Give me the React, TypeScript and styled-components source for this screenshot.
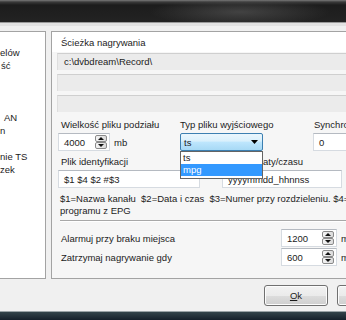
import React from "react";
import styled, { createGlobalStyle } from "styled-components";

const GlobalStyle = createGlobalStyle`
	html, body {
		margin: 0;
		padding: 0;
		background: #f0f0f0;
	}
	body {
		font-family: "Liberation Sans", Arial, sans-serif;
		font-size: 9.5px;
		color: #1c1c1c;
	}
`;

const Window = styled.div`
	width: 346px;
	height: 320px;
	overflow: hidden;
	display: flex;
	flex-direction: column;
	background: #f0f0f0;
`;

const TopFrame = styled.div`
	flex: none;
	height: 22px;
	background: radial-gradient(ellipse 90px 14px at 240px 12px, rgba(90, 90, 90, 0.6), transparent),
		linear-gradient(to bottom, #7a7a7a 0, #3a3a3a 2px, #1c1c1c 5px, #232323 100%);
	border-bottom: 1px solid #9a9a9a;
`;

const FrameEdge = styled.div`
	flex: none;
	height: 3px;
	background: #e2e2e2;
`;

const Body = styled.div`
	flex: none;
	display: flex;
	gap: 5px;
	padding-top: 5px;
	height: 248px;
`;

const TreeList = styled.div`
	flex: none;
	box-sizing: border-box;
	width: 46px;
	height: 248px;
	background: #fff;
	border: 1px solid #a3a3a3;
	border-left: none;
	padding-top: 14px;
	overflow: hidden;
`;

const TreeItem = styled.div<{ $indent: number }>`
	height: 13px;
	line-height: 13px;
	padding-left: ${(p) => p.$indent}px;
	white-space: nowrap;
`;

const Panel = styled.div`
	flex: none;
	box-sizing: border-box;
	width: 320px;
	height: 248px;
	background: #f6f6f6;
	border: 1px solid #a3a3a3;
	border-right: none;
`;

const PanelHeader = styled.div`
	height: 20px;
	line-height: 22px;
	padding-left: 9px;
	background: #fff;
`;

const Content = styled.div`
	padding-left: 6px;
	display: flex;
	flex-direction: column;
`;

const GreyField = styled.div<{ $top: number }>`
	box-sizing: border-box;
	height: 17px;
	margin-top: ${(p) => p.$top}px;
	margin-left: -1px;
	padding-left: 6px;
	line-height: 16px;
	background: #ebebeb;
	border-top: 1px solid #cfcfcf;
	border-left: 1px solid #dedede;
`;

const FieldRow = styled.div<{ $top: number }>`
	display: flex;
	margin-top: ${(p) => p.$top}px;
`;

const Column = styled.div<{ $width?: number }>`
	flex: none;
	width: ${(p) => (p.$width ? `${p.$width}px` : "auto")};
	display: flex;
	flex-direction: column;
	position: relative;
`;

const Label = styled.div<{ $shift?: number }>`
	height: 12px;
	line-height: 12px;
	margin-left: ${(p) => p.$shift ?? 3}px;
	margin-bottom: 2px;
	white-space: nowrap;
`;

const EditBox = styled.div<{ $width: number }>`
	box-sizing: border-box;
	width: ${(p) => p.$width}px;
	height: 18px;
	display: flex;
	align-items: center;
	justify-content: space-between;
	padding: 0 2px 0 5px;
	background: #fff;
	border: 1px solid #d6dbe1;
	border-top-color: #b5bac1;
	white-space: nowrap;
`;

const WithUnit = styled.div`
	display: flex;
	align-items: center;
	gap: 4px;
`;

const Combo = styled.div`
	box-sizing: border-box;
	width: 83px;
	height: 18px;
	display: flex;
	align-items: center;
	justify-content: space-between;
	padding: 0 4px 0 3px;
	border: 1px solid #3c7fb1;
	border-radius: 2px;
	background: linear-gradient(to bottom, #eaf6fd 0%, #d9f0fc 45%, #bee6fd 50%, #a7d9f5 100%);
`;

const DropList = styled.div`
	position: absolute;
	top: 32px;
	left: 0;
	box-sizing: border-box;
	width: 83px;
	padding: 0 0 2px;
	background: #fff;
	border: 1px solid #646464;
	z-index: 2;
`;

const DropItem = styled.div<{ $active?: boolean }>`
	height: 12px;
	line-height: 12px;
	padding-left: 2px;
	background: ${(p) => (p.$active ? "#3399ff" : "transparent")};
	color: ${(p) => (p.$active ? "#fff" : "inherit")};
`;

const Description = styled.div`
	margin-top: 5px;
	padding-left: 2px;
	line-height: 12px;
	white-space: pre;
`;

const Separator = styled.div`
	margin: 3px 0 7px 2px;
	height: 1px;
	background: #a8a8a8;
	border-bottom: 1px solid #fff;
`;

const LimitRow = styled.div`
	display: flex;
	align-items: center;
	height: 18px;
	margin-bottom: 1px;
`;

const LimitLabel = styled.div`
	flex: none;
	width: 220px;
	padding-left: 3px;
	white-space: nowrap;
`;

const Footer = styled.div`
	flex: none;
	height: 32px;
	display: flex;
	align-items: flex-start;
	gap: 9px;
	padding: 6px 0 0 264px;
	box-sizing: border-box;
`;

const Button = styled.button`
	flex: none;
	width: 64px;
	height: 21px;
	padding: 0;
	font: inherit;
	color: #1c1c1c;
	border: 1px solid #707070;
	border-radius: 3px;
	background: linear-gradient(to bottom, #f2f2f2 0%, #ebebeb 50%, #dddddd 51%, #cfcfcf 100%);
	box-shadow: inset 0 0 0 1px #fcfcfc;
	u {
		text-decoration: underline;
	}
`;

const BottomFrame = styled.div`
	flex: none;
	height: 8px;
	border-top: 1px solid #9aa3a6;
	background: linear-gradient(to bottom, #33444a, #15202a);
`;

const SpinBox = styled.svg`
	flex: none;
	display: block;
`;

const Spin = () => (
	<SpinBox width="12" height="14" viewBox="0 0 12 14">
		<defs>
			<linearGradient id="sp" x1="0" y1="0" x2="1" y2="0">
				<stop offset="0" stopColor="#f6f6f6" />
				<stop offset="1" stopColor="#d9d9d9" />
			</linearGradient>
		</defs>
		<rect x="0.5" y="0.5" width="11" height="6" rx="1.5" fill="url(#sp)" stroke="#8a8a8a" />
		<rect x="0.5" y="7.5" width="11" height="6" rx="1.5" fill="url(#sp)" stroke="#8a8a8a" />
		<path d="M3 5 L6 2 L9 5 Z" fill="#111" />
		<path d="M3 9 L6 12 L9 9 Z" fill="#111" />
	</SpinBox>
);

const ComboArrow = () => (
	<svg width="7" height="4" viewBox="0 0 7 4">
		<path d="M0 0 H7 L3.5 4 Z" fill="#000" />
	</svg>
);

const tree = [
	{ text: "elów", indent: 0 },
	{ text: "ść", indent: 1 },
	{ text: "", indent: 0 },
	{ text: "", indent: 0 },
	{ text: "", indent: 0 },
	{ text: "AN", indent: 4 },
	{ text: "n", indent: 0 },
	{ text: "", indent: 0 },
	{ text: "nie TS", indent: 0 },
	{ text: "zek", indent: 0 },
];

const App = () => {
	return (
		<Window>
			<GlobalStyle />
			<TopFrame />
			<FrameEdge />
			<Body>
				<TreeList>
					{tree.map((item, i) => (
						<TreeItem key={i} $indent={item.indent}>
							{item.text}
						</TreeItem>
					))}
				</TreeList>
				<Panel>
					<PanelHeader>Ścieżka nagrywania</PanelHeader>
					<Content>
						<GreyField $top={1}>c:\dvbdream\Record\</GreyField>
						<GreyField $top={4} />
						<GreyField $top={4} />

						<FieldRow $top={7}>
							<Column $width={122}>
								<Label>Wielkość pliku podziału</Label>
								<WithUnit>
									<EditBox $width={52}>
										4000
										<Spin />
									</EditBox>
									mb
								</WithUnit>
							</Column>
							<Column $width={133}>
								<Label $shift={0}>Typ pliku wyjściowego</Label>
								<Combo>
									ts
									<ComboArrow />
								</Combo>
								<DropList>
									<DropItem>ts</DropItem>
									<DropItem $active>mpg</DropItem>
								</DropList>
							</Column>
							<Column>
								<Label $shift={1}>Synchronizacja</Label>
								<EditBox $width={60}>0</EditBox>
							</Column>
						</FieldRow>

						<FieldRow $top={5}>
							<Column $width={164}>
								<Label>Plik identyfikacji</Label>
								<EditBox $width={142}>$1 $4 $2 #$3</EditBox>
							</Column>
							<Column>
								<Label>Format daty/czasu</Label>
								<EditBox $width={120}>yyyymmdd_hhnnss</EditBox>
							</Column>
						</FieldRow>

						<Description>
							{"$1=Nazwa kanału  $2=Data i czas  $3=Numer przy rozdzieleniu. $4=Nazwa\nprogramu z EPG"}
						</Description>
						<Separator />

						<LimitRow>
							<LimitLabel>Alarmuj przy braku miejsca</LimitLabel>
							<WithUnit>
								<EditBox $width={56}>
									1200
									<Spin />
								</EditBox>
								mb
							</WithUnit>
						</LimitRow>
						<LimitRow>
							<LimitLabel>Zatrzymaj nagrywanie gdy</LimitLabel>
							<WithUnit>
								<EditBox $width={56}>
									600
									<Spin />
								</EditBox>
								mb
							</WithUnit>
						</LimitRow>
					</Content>
				</Panel>
			</Body>
			<Footer>
				<Button>
					<u>O</u>k
				</Button>
				<Button>Anuluj</Button>
			</Footer>
			<BottomFrame />
		</Window>
	);
};

export default App;
